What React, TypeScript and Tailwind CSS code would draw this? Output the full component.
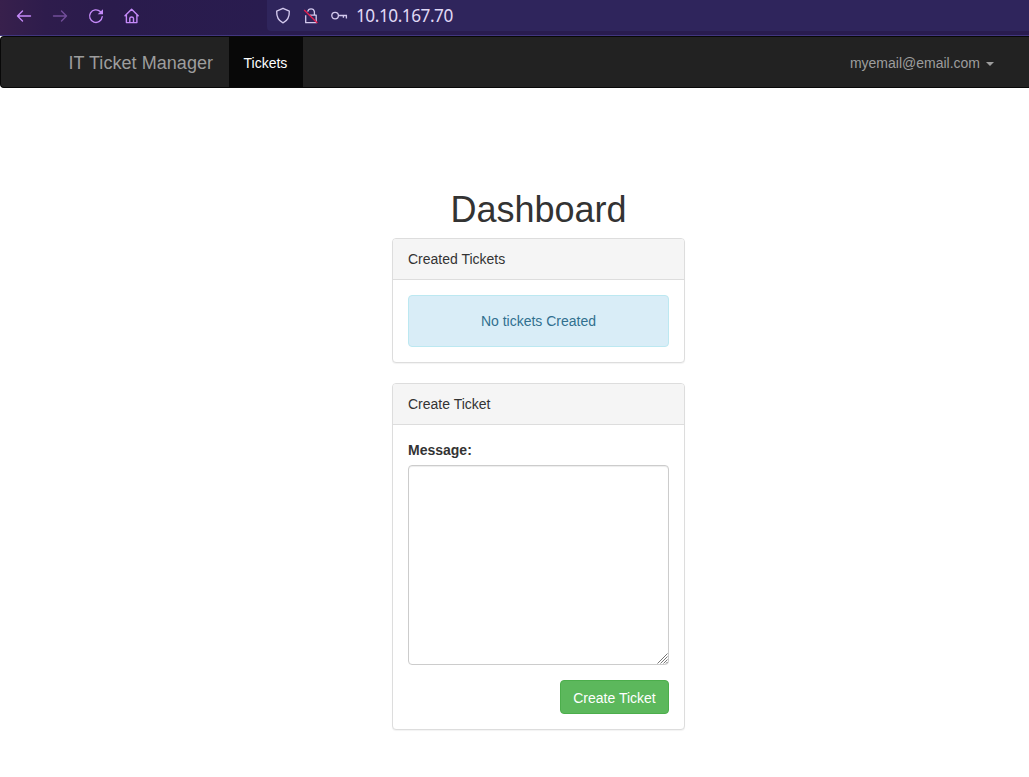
import type { ReactNode } from "react";

function BrowserBar() {
  return (
    <div className="flex h-9 border-b border-[#41367f] bg-[linear-gradient(90deg,#38204c_0px,#2e1c4c_45px,#2a1b4c_110px,#291c4f_267px)]">
      <div className="flex h-[31px] w-[267px] items-center pl-4 text-[#c58af9]">
        <svg width="16" height="16" viewBox="0 0 16 16" fill="none" stroke="currentColor" strokeWidth="1.4" strokeLinecap="round" strokeLinejoin="round">
          <path d="M14.5 8H1.5M6.5 3L1.5 8L6.5 13" />
        </svg>
        <svg className="ml-5 opacity-45" width="16" height="16" viewBox="0 0 16 16" fill="none" stroke="currentColor" strokeWidth="1.4" strokeLinecap="round" strokeLinejoin="round">
          <path d="M1.5 8H14.5M9.5 3L14.5 8L9.5 13" />
        </svg>
        <svg className="ml-5" width="16" height="16" viewBox="0 0 16 16" fill="none" stroke="currentColor" strokeWidth="1.4" strokeLinecap="round">
          <path d="M12.3 3.6A6.3 6.3 0 1 0 14.2 8.8" />
          <path d="M15 1.2V6.3H9.7Z" fill="currentColor" stroke="none" />
        </svg>
        <svg className="ml-5" width="16" height="16" viewBox="0 0 16 16" fill="none" stroke="currentColor" strokeWidth="1.4" strokeLinecap="round" strokeLinejoin="round">
          <path d="M1 7.8L7.6 1.2L14.2 7.8M2.4 7V14.6H12.9V7M5.8 14.3V10.2Q5.8 9 7.6 9T9.5 10.2V14.3" />
        </svg>
      </div>
      <div className="flex h-[31px] flex-1 items-center rounded-bl bg-[#2f255c] pl-2 text-[#d3c9ed]">
        <svg width="16" height="18" viewBox="0 0 16 18" fill="none" stroke="currentColor" strokeWidth="1.35" strokeLinejoin="round">
          <path d="M8 1.3L14.3 4.2Q14.7 12.5 8 15.9Q1.3 12.5 1.7 4.2Z" />
        </svg>
        <svg className="ml-3" width="16" height="18" viewBox="0 0 16 18" fill="none" stroke="currentColor" strokeWidth="1.3" strokeLinejoin="round">
          <path d="M4.7 4.6A3.4 3.4 0 0 1 11.4 4.6V8.2M6.5 8.2H13.2V15.7H2.7V8.2" />
          <path d="M1.2 3L14.4 16" stroke="#e51f50" strokeWidth="1.4" />
        </svg>
        <svg className="ml-3" width="17" height="16" viewBox="0 0 17 16" fill="none" stroke="currentColor" strokeWidth="1.35">
          <circle cx="4.1" cy="7.6" r="3.3" />
          <path d="M7.5 7.5H16M12.4 7.5V9.8M15.4 7.5V10.6" />
        </svg>
        <span className="ml-2 font-['Noto_Sans',sans-serif] text-[17.2px] leading-[31px] tracking-[-0.46px] text-[#e0d9f5]">10.10.167.70</span>
      </div>
    </div>
  );
}

function Navbar() {
  return (
    <nav className="flex h-[52px] justify-between rounded-l border border-r-0 border-[#080808] bg-[#222222] text-[#9d9d9d]">
      <div className="flex">
        <a className="w-[228px] pl-[67.5px] text-lg leading-[52px] tracking-[0.05px]">IT Ticket Manager</a>
        <a className="h-[50px] w-[74px] bg-[#080808] pl-[14.5px] leading-[52px] text-white">Tickets</a>
      </div>
      <a className="flex items-center pr-[35px] leading-[50px]">
        <span className="pt-0.5">myemail@email.com</span>
        <span className="ml-1.5 mt-1 border-x-4 border-t-4 border-x-transparent border-t-[#9d9d9d]" />
      </a>
    </nav>
  );
}

function Panel({ title, children }: { title: string; children: ReactNode }) {
  return (
    <section className="mb-5 rounded border border-[#dddddd] bg-white shadow-[0_1px_1px_rgba(0,0,0,0.05)]">
      <h2 className="rounded-t-[3px] border-b border-[#dddddd] bg-[#f5f5f5] px-[15px] py-2.5 leading-5">{title}</h2>
      <div className="p-[15px]">{children}</div>
    </section>
  );
}

export default function App() {
  return (
    <div className="h-[777px] overflow-hidden bg-white font-['Liberation_Sans',Arial,sans-serif] text-sm text-[#333333]">
      <BrowserBar />
      <Navbar />
      <main className="ml-[392px] w-[293px] pt-[102px]">
        <h1 className="mb-[9px] text-center text-4xl leading-[39px]">Dashboard</h1>
        <Panel title="Created Tickets">
          <div className="rounded border border-[#bce8f1] bg-[#d9edf7] p-[15px] text-center leading-5 text-[#31708f]">No tickets Created</div>
        </Panel>
        <Panel title="Create Ticket">
          <form>
            <label htmlFor="message" className="mb-[5px] block font-bold leading-5">Message:</label>
            <div className="relative">
              <textarea id="message" className="block h-[200px] w-full resize-none rounded border border-[#cccccc] px-3 py-1.5 shadow-[inset_0_1px_1px_rgba(0,0,0,0.075)] outline-none" />
              <svg className="pointer-events-none absolute bottom-px right-px" width="11" height="11" viewBox="0 0 11 11" fill="none" stroke="#777777" strokeWidth="1">
                <path d="M0.5 10.5L10.5 0.5M3.5 10.5L10.5 3.5M6.5 10.5L10.5 6.5M9 10.5L10.5 9" />
              </svg>
            </div>
            <div className="mt-[15px] flex justify-end">
              <button type="button" className="h-[34px] w-[109px] rounded border border-[#4cae4c] bg-[#5cb85c] pt-0.5 leading-5 text-white">Create Ticket</button>
            </div>
          </form>
        </Panel>
      </main>
    </div>
  );
}
